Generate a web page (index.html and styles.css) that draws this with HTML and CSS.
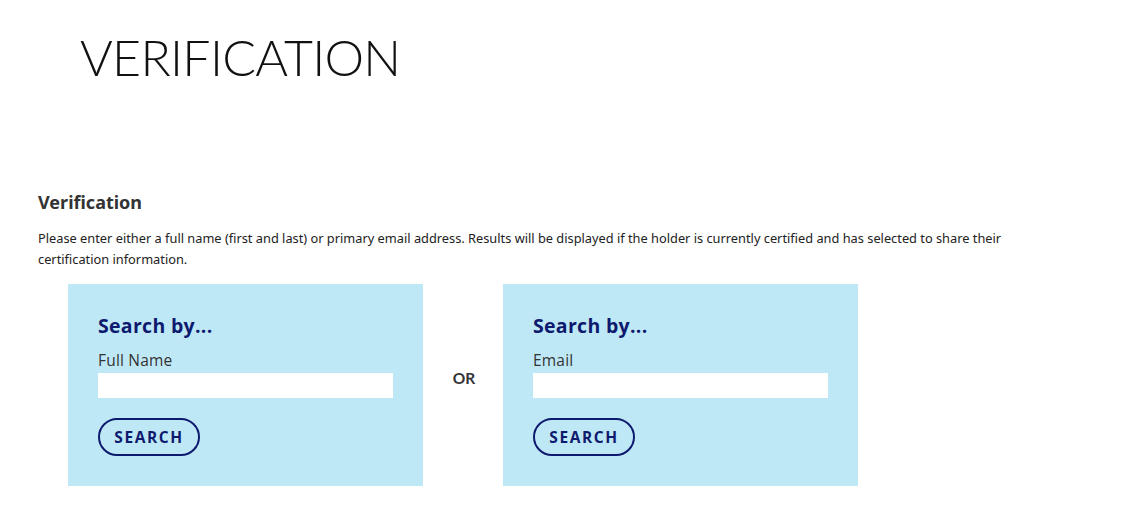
FILE: index.html
```html
<!DOCTYPE html>
<html lang="en">
<head>
<meta charset="utf-8">
<title>Verification</title>
<link rel="stylesheet" href="styles.css">
</head>
<body>
<header class="page-header">
  <h1 class="page-title">VERIFICATION</h1>
</header>
<main class="content">
  <h2 class="section-title">Verification</h2>
  <p class="intro">Please enter either a full name (first and last) or primary email address. Results will be displayed if the holder is currently certified and has selected to share their certification information.</p>
  <div class="search-row">
    <form class="search-box">
      <h3 class="box-title">Search by...</h3>
      <label class="field-label">Full Name</label>
      <input class="field-input" type="text">
      <button class="search-btn" type="button">SEARCH</button>
    </form>
    <div class="or">OR</div>
    <form class="search-box">
      <h3 class="box-title">Search by...</h3>
      <label class="field-label">Email</label>
      <input class="field-input" type="text">
      <button class="search-btn" type="button">SEARCH</button>
    </form>
  </div>
</main>
</body>
</html>
```

FILE: styles.css
```css
* { box-sizing: border-box; }
html, body { margin: 0; padding: 0; background: #fff; }
body { font-family: "Open Sans", "Noto Sans", sans-serif; color: #333; }

.page-header { padding: 27px 0 0 80px; height: 190px; }
.page-title {
  margin: 0;
  font-family: Lato, sans-serif;
  font-weight: 300;
  font-size: 50px;
  line-height: 60px;
  color: #111;
  letter-spacing: -0.7px;
}

.content { padding: 0 0 0 38px; }
.section-title {
  margin: 0;
  font-family: "Noto Sans", sans-serif;
  font-weight: 700;
  font-size: 18px;
  line-height: 24px;
  color: #333;
}
.intro {
  margin: 14px 0 0;
  width: 1000px;
  font-family: "Noto Sans", sans-serif;
  font-size: 12.8px;
  line-height: 21px;
  color: #222;
}

.search-row {
  display: flex;
  align-items: stretch;
  margin: 14px 0 0 30px;
}
.search-box {
  width: 355px;
  height: 202px;
  background: #bfe8f7;
  padding: 30px 30px 30px 30px;
  display: flex;
  flex-direction: column;
  align-items: flex-start;
}
.box-title {
  margin: 0;
  font-family: "Open Sans", sans-serif;
  font-weight: 700;
  font-size: 19.5px;
  line-height: 24px;
  letter-spacing: 0.3px;
  color: #0d1a6e;
}
.field-label {
  margin-top: 12px;
  font-family: "Open Sans", sans-serif;
  font-size: 15.5px;
  line-height: 20px;
  letter-spacing: 0.2px;
  color: #333;
}
.field-input {
  margin-top: 3px;
  width: 295px;
  height: 25px;
  border: 0;
  background: #fff;
  padding: 0 6px;
}
.search-btn {
  margin-top: 20px;
  height: 38px;
  width: 102px;
  border: 2px solid #0d1a6e;
  border-radius: 19px;
  background: transparent;
  color: #0d1a6e;
  font-family: "Open Sans", sans-serif;
  font-weight: 700;
  font-size: 15.5px;
  letter-spacing: 1.6px;
  padding: 0;
}
.or {
  width: 80px;
  display: flex;
  align-items: center;
  justify-content: center;
  padding: 0 0 14px 2px;
  font-family: Lato, sans-serif;
  font-weight: 700;
  font-size: 15.5px;
  color: #333;
}
```
